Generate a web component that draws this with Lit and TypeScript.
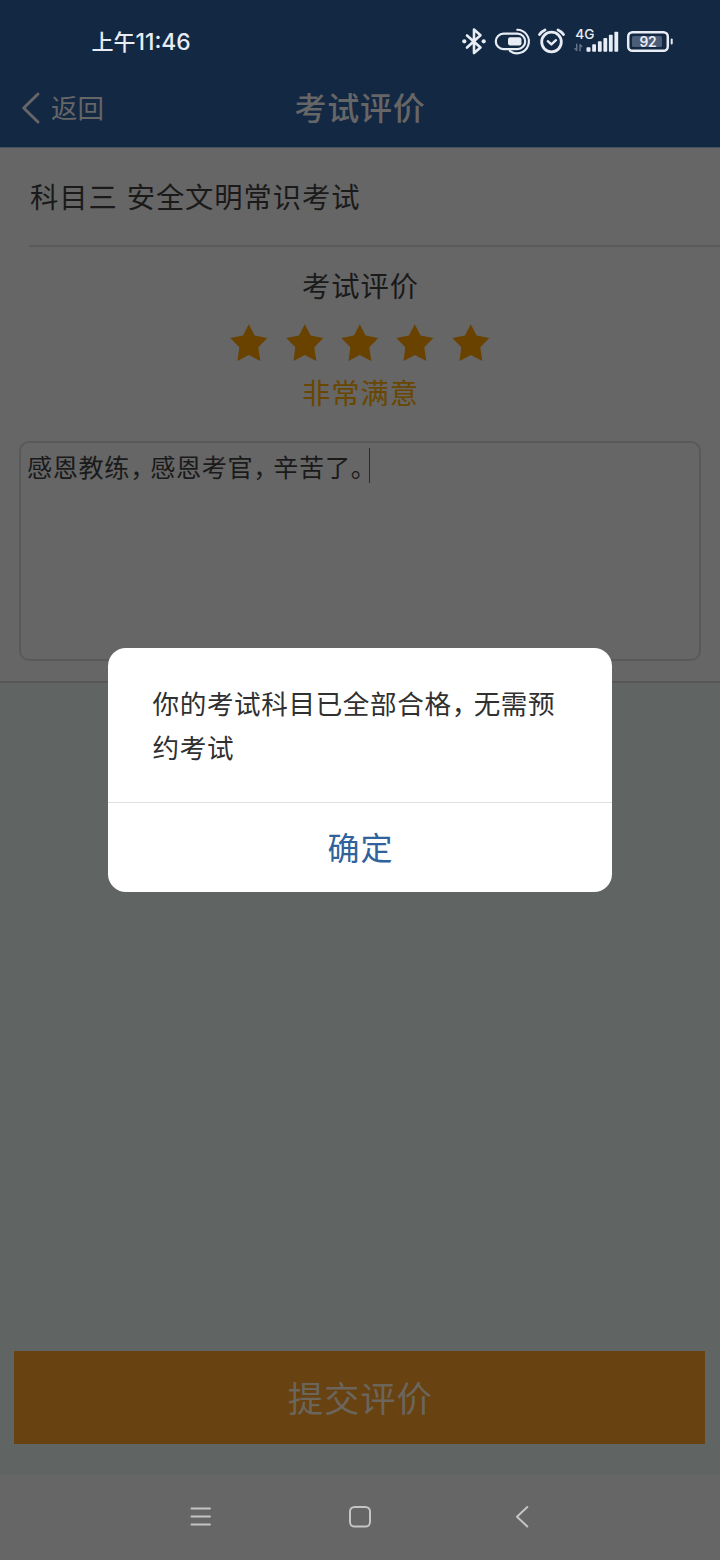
import { LitElement, html, css } from "lit";
import { customElement, state } from "lit/decorators.js";

@customElement("status-bar")
export class StatusBar extends LitElement {
  static styles = css`
    :host {
      display: flex;
      height: 68px;
      box-sizing: border-box;
      padding: 0 40px 0 91.5px;
      justify-content: space-between;
      color: #e8edf5;
    }
    .time {
      font-size: 22px;
      line-height: 32px;
      padding-top: 24px;
      font-weight: 500;
      white-space: nowrap;
    }
    .digits {
      font-family: Inter, sans-serif;
      font-size: 22.8px;
      font-weight: 500;
    }
    svg {
      display: block;
      width: 220px;
      height: 68px;
    }
    .small {
      font: 500 13.6px Inter, sans-serif;
    }
    .level {
      font: 600 13.8px Inter, sans-serif;
      letter-spacing: -0.3px;
    }
  `;

  render() {
    return html`
      <div class="time">上午<span class="digits">11:46</span></div>
      <svg viewBox="460 0 220 68" fill="none" stroke="#e8edf5" stroke-width="2.6" stroke-linecap="round" stroke-linejoin="round">
        <path d="M467 35.5 480.5 47.5 474 53V29.5L480.5 35.2 467 47.5" />
        <circle cx="464.3" cy="41.3" r="2.1" fill="#e8edf5" stroke="none" />
        <circle cx="483.7" cy="41.3" r="2.1" fill="#e8edf5" stroke="none" />
        <rect x="495.8" y="33.7" width="29.4" height="15.4" rx="7.7" stroke-width="2.2" />
        <rect x="508" y="37.3" width="13.5" height="8.2" rx="2.2" fill="#e8edf5" stroke="none" />
        <path d="M517.2 29.7A11.8 11.8 0 1 1 509.8 50.8" stroke-width="2.1" />
        <circle cx="551.5" cy="42" r="9.8" stroke-width="2.8" />
        <path d="M547.8 41.2l3.6 3.2 4.6-4.2" stroke-width="2.4" />
        <path d="M539.5 34.5Q541.5 31.5 545 30M563.5 34.5Q561.5 31.5 558 30" stroke-width="2.8" />
        <text class="small" x="575.3" y="39" fill="#e8edf5" stroke="none">4G</text>
        <path d="M576.7 44.2v6.2l-1.8-1.8M580 50.8v-6.2l1.8 1.8" stroke="#67758b" stroke-width="1.4" />
        <g fill="#e8edf5" stroke="none">
          <rect x="586.5" y="47.2" width="4" height="4.6" rx=".8" />
          <rect x="592.2" y="44.2" width="3.8" height="7.6" rx=".8" />
          <rect x="597.9" y="41.2" width="3.8" height="10.6" rx=".8" />
          <rect x="603.4" y="38" width="3.8" height="13.8" rx=".8" />
          <rect x="608.9" y="34.8" width="3.8" height="17" rx=".8" />
          <rect x="614.4" y="31.8" width="3.8" height="20" rx=".8" />
        </g>
        <rect x="628.2" y="32.2" width="39.6" height="18.6" rx="4.4" stroke-width="2.5" />
        <rect x="632" y="36" width="30" height="11" rx="1.5" fill="#4d5d76" stroke="none" />
        <path d="M671.7 39.5v4" stroke-width="2" />
        <text class="level" x="648" y="46.6" text-anchor="middle" fill="#e8edf5" stroke="none">92</text>
      </svg>
    `;
  }
}

@customElement("star-rating")
export class StarRating extends LitElement {
  static styles = css`
    :host {
      display: flex;
      justify-content: center;
      gap: 17.4px;
    }
    svg {
      display: block;
      width: 38px;
      height: 38px;
    }
  `;

  render() {
    return Array.from({ length: 5 }, () => html`
      <svg viewBox="0 0 38 38">
        <path fill="#694200" d="M18.8 .3 24.6 11.6 37.3 13.9 28.3 23.2 30.3 37 18.8 31 7.5 37 9.3 23.2 .3 13.9 13 11.6Z" />
      </svg>`);
  }
}

@customElement("alert-dialog")
export class AlertDialog extends LitElement {
  static styles = css`
    :host {
      display: block;
      width: 504px;
      height: 244px;
      border-radius: 18px;
      background: #fff;
      overflow: hidden;
    }
    .message {
      height: 155px;
      box-sizing: border-box;
      padding: 33px 40px 0 44.5px;
      font-size: 26.6px;
      letter-spacing: 0.6px;
      line-height: 44px;
      color: #303030;
      white-space: nowrap;
      border-bottom: 1px solid #dfdfdf;
    }
    .comma {
      letter-spacing: -4.6px;
    }
    .confirm {
      display: block;
      width: 100%;
      height: 89px;
      border: 0;
      padding: 0 0 2px 1px;
      background: none;
      font: inherit;
      font-size: 32px;
      letter-spacing: 1px;
      line-height: 87px;
      color: #30629b;
    }
  `;

  render() {
    return html`
      <div class="message">你的考试科目已全部合格<span class="comma">，</span>无需预<br />约考试</div>
      <button class="confirm" @click=${() => this.dispatchEvent(new CustomEvent("confirm"))}>确定</button>
    `;
  }
}

@customElement("app-root")
export class AppRoot extends LitElement {
  static styles = css`
    :host {
      display: flex;
      flex-direction: column;
      position: relative;
      width: 720px;
      height: 1560px;
      overflow: hidden;
      background: #606462;
      font-family: "Noto Sans CJK SC", sans-serif;
    }
    .top {
      height: 147px;
      background: #132843;
      border-bottom: 1px solid #45525f;
      box-sizing: content-box;
    }
    .bar {
      display: grid;
      grid-template-columns: 1fr auto 1fr;
      height: 79px;
      align-items: center;
      color: #666;
    }
    .back {
      display: flex;
      align-items: center;
      gap: 10px;
      padding-left: 20px;
      font-size: 26.5px;
      line-height: 40px;
    }
    .back svg {
      width: 21px;
      height: 34px;
    }
    .back span {
      padding-bottom: 2px;
    }
    .title {
      font-size: 32px;
      letter-spacing: 0.8px;
      font-weight: 500;
      line-height: 48px;
      padding-bottom: 4px;
    }
    .card {
      height: 533px;
      box-sizing: content-box;
      background: #666;
      border-bottom: 2px solid #575757;
    }
    .subject {
      height: 97px;
      margin-left: 29px;
      padding-left: 1px;
      border-bottom: 2px solid #5a5a5a;
      font-size: 28.3px;
      letter-spacing: 0.95px;
      word-spacing: 1.6px;
      line-height: 96px;
      color: #1a1a1a;
      white-space: pre;
    }
    .label {
      font-size: 28.3px;
      letter-spacing: 0.9px;
      line-height: 40px;
      text-align: center;
      color: #1a1a1a;
      padding: 18px 0 19px 1px;
    }
    .verdict {
      font-size: 28.3px;
      letter-spacing: 0.9px;
      line-height: 40px;
      text-align: center;
      color: #694700;
      padding: 10px 0 0 1px;
    }
    .comment {
      display: flex;
      margin: 29px 19px 0 18.5px;
      height: 216px;
      border: 2px solid #595959;
      border-radius: 10px;
      padding: 0 6.5px;
      font-size: 25.2px;
      letter-spacing: 0.6px;
      line-height: 46px;
      color: #1a1a1a;
      white-space: nowrap;
    }
    .comma {
      letter-spacing: -5.2px;
    }
    .stop {
      letter-spacing: -7px;
    }
    .caret {
      width: 1px;
      height: 35px;
      margin: 5px 0 0 0.5px;
      background: #2b2b2b;
    }
    .action {
      flex: 1;
      display: flex;
      flex-direction: column;
      justify-content: flex-end;
      padding: 0 15px 31px 14.4px;
    }
    .submit {
      height: 93px;
      border: 0;
      padding: 0 0 2px 1px;
      background: #684210;
      color: #6b655c;
      font: inherit;
      font-size: 35.4px;
      letter-spacing: 0.8px;
      line-height: 91px;
    }
    .nav {
      height: 85px;
      background: #666;
    }
    .nav svg {
      display: block;
      width: 720px;
      height: 85px;
    }
    .scrim {
      position: absolute;
      inset: 0;
      display: flex;
      justify-content: center;
      align-items: flex-start;
      padding-top: 648px;
    }
  `;

  @state() private open = true;

  render() {
    return html`
      <header class="top">
        <status-bar></status-bar>
        <div class="bar">
          <div class="back">
            <svg viewBox="0 0 21 34" fill="none" stroke="#666" stroke-width="3" stroke-linecap="round" stroke-linejoin="round">
              <path d="M18 3 3.7 17 18 31" />
            </svg>
            <span>返回</span>
          </div>
          <div class="title">考试评价</div>
          <div></div>
        </div>
      </header>
      <main class="card">
        <div class="subject">科目三 安全文明常识考试</div>
        <div class="label">考试评价</div>
        <star-rating></star-rating>
        <div class="verdict">非常满意</div>
        <div class="comment">
          <div>感恩教练<span class="comma">，</span>感恩考官<span class="comma">，</span>辛苦了<span class="stop">。</span></div>
          <div class="caret"></div>
        </div>
      </main>
      <section class="action">
        <button class="submit">提交评价</button>
      </section>
      <nav class="nav">
        <svg viewBox="0 1475 720 85" fill="none" stroke="#c4c4c4" stroke-width="2" stroke-linecap="round" stroke-linejoin="round">
          <path d="M191.5 1508.5H210M191.5 1516.5H210M191.5 1524.5H210" />
          <rect x="350" y="1507" width="20" height="19.6" rx="4.5" />
          <path d="M527.3 1507 517 1516.8 527.3 1526.5" />
        </svg>
      </nav>
      ${this.open
        ? html`<div class="scrim"><alert-dialog @confirm=${() => (this.open = false)}></alert-dialog></div>`
        : null}
    `;
  }
}
